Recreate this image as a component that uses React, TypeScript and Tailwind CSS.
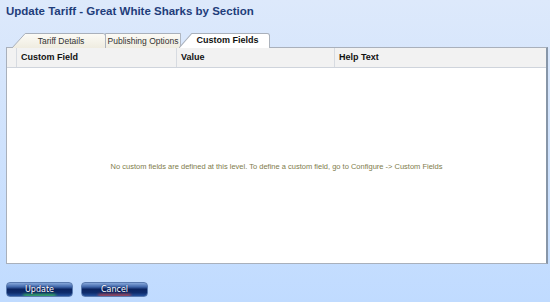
import React from 'react'

const COLUMNS = [
  { label: 'Custom Field', width: 'w-[160px]' },
  { label: 'Value', width: 'w-[158px]' },
  { label: 'Help Text', width: 'flex-1' },
]

function Tab({ id, label, active, className, slant }: { id: string; label: string; active?: boolean; className: string; slant?: boolean }) {
  return (
    <div className={`relative h-[15px] ${className}`}>
      <svg className="absolute inset-0 h-full w-full" preserveAspectRatio="none" viewBox="0 0 100 15">
        <defs>
          <linearGradient id={id} x1="0" y1="0" x2="0" y2="1">
            <stop offset="0" stopColor={active ? '#ffffff' : '#fcfbf6'} />
            <stop offset="1" stopColor={active ? '#ffffff' : '#efece0'} />
          </linearGradient>
        </defs>
        <path
          d={slant ? 'M0 15 L14 0.5 L97 0.5 Q99.5 0.5 99.5 3 L99.5 15' : 'M0.5 15 L0.5 0.5 L99.5 0.5 L99.5 15'}
          fill={`url(#${id})`}
          stroke="#a9b0bb"
          strokeWidth="1"
          vectorEffect="non-scaling-stroke"
        />
      </svg>
      <span
        className={`relative flex h-full items-center justify-center whitespace-nowrap pt-[1px] ${
          active ? 'pl-[6px] text-[9px] font-bold text-[#111]' : 'text-[8.5px] text-[#333]'
        } ${slant && !active ? 'pl-[4px]' : ''}`}
      >
        {label}
      </span>
    </div>
  )
}

function GlossButton({ label, glow }: { label: string; glow: string }) {
  return (
    <button className="relative h-[15px] w-[67px] overflow-hidden rounded-[4px] border border-[#5a7bb0] bg-[linear-gradient(#86a7da_0%,#3f66aa_30%,#0b2460_48%,#0f2c6c_75%,#25529e_100%)] font-['DejaVu_Sans',sans-serif] text-[8px] leading-none text-white [text-shadow:0_0_2px_#001040]">
      <span className={`absolute bottom-[-1px] left-[16px] right-[16px] h-[3px] rounded-full opacity-80 blur-[1.5px] ${glow}`} />
      <span className="relative">{label}</span>
    </button>
  )
}

export default function App() {
  return (
    <div className="flex h-[302px] w-[550px] flex-col bg-[linear-gradient(#dde9fb,#c0dbff)] font-['Liberation_Sans',sans-serif]">
      <h1 className="px-[6px] pt-[4px] text-[11.5px] font-bold leading-[14px] text-[#1f3d7a]">
        Update Tariff - Great White Sharks by Section
      </h1>

      <div className="mt-[15px] flex pl-[12px]">
        <Tab id="tab1" label="Tariff Details" className="w-[94px]" slant />
        <Tab id="tab2" label="Publishing Options" className="w-[76px] -ml-px" />
        <Tab id="tab3" label="Custom Fields" className="w-[91px] -ml-[2px]" active slant />
      </div>

      <div className="mx-[6px] -mt-px flex h-[217px] w-[542px] flex-col border border-r-2 border-[#a9b0bb] border-r-[#8796a8] bg-white">
        <div className="flex h-[20px] border-b border-[#cfd4dc] bg-[#f2f2f2] text-[9px] font-bold text-[#111]">
          <div className="w-[10px] border-r border-[#d7dbe1]" />
          {COLUMNS.map((c) => (
            <div key={c.label} className={`${c.width} flex items-center border-r border-[#d7dbe1] pl-[4px] last:border-r-0`}>
              {c.label}
            </div>
          ))}
        </div>
        <div className="flex flex-1 items-center justify-center pt-[3px] text-[7.5px] text-[#807c4c]">
          No custom fields are defined at this level. To define a custom field, go to Configure -&gt; Custom Fields
        </div>
      </div>

      <div className="mt-[18px] flex gap-[8px] px-[6px]">
        <GlossButton label="Update" glow="bg-[#3fd04a]" />
        <GlossButton label="Cancel" glow="bg-[#d8403a]" />
      </div>
    </div>
  )
}
